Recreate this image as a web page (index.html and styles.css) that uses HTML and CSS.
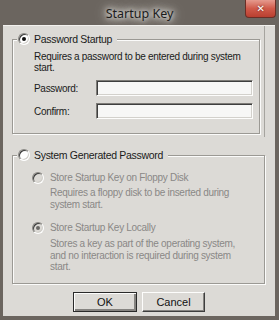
FILE: index.html
```html
<!DOCTYPE html>
<html lang="en">
<head>
  <meta charset="UTF-8">
  <meta name="viewport" content="width=device-width, initial-scale=1.0">
  <title>Startup Key</title>
  <link rel="stylesheet" href="styles.css">
</head>
<body>
  <div class="window">
    <div class="titlebar">
      <span class="title">Startup Key</span>
      <div class="close">&#x2715;</div>
    </div>

    <div class="client">
      <div class="top-panel">
        <div class="group group-password">
          <div class="caption">
            <span class="radio"><span class="dot"></span></span>
            <span>Password Startup</span>
          </div>
          <p class="desc">Requires a password to be entered during system<br>start.</p>
          <div class="field">
            <label>Password:</label>
            <input type="password" class="textbox">
          </div>
          <div class="field">
            <label>Confirm:</label>
            <input type="password" class="textbox">
          </div>
        </div>
      </div>

      <div class="group group-system">
        <div class="caption">
          <span class="radio"></span>
          <span>System Generated Password</span>
        </div>

        <div class="option disabled first">
          <span class="radio"></span>
          <span>Store Startup Key on Floppy Disk</span>
        </div>
        <p class="desc sub disabled">Requires a floppy disk to be inserted during<br>system start.</p>

        <div class="option disabled">
          <span class="radio"><span class="dot"></span></span>
          <span>Store Startup Key Locally</span>
        </div>
        <p class="desc sub disabled long">Stores a key as part of the operating system,<br>and no interaction is required during system<br>start.</p>
      </div>

      <div class="buttons">
        <button class="btn default">OK</button>
        <button class="btn">Cancel</button>
      </div>
    </div>
  </div>
</body>
</html>
```

FILE: styles.css
```css
* {
  margin: 0;
  padding: 0;
  box-sizing: border-box;
}

body {
  width: 279px;
  height: 320px;
  overflow: hidden;
  background: #6b655f;
  font-family: 'Liberation Sans', Arial, sans-serif;
  font-size: 10px;
  letter-spacing: -0.3px;
  white-space: nowrap;
  color: #1a1a1a;
}

.window {
  display: flex;
  flex-direction: column;
  width: 279px;
  height: 320px;
  background: #6b655f;
}

.titlebar {
  position: relative;
  height: 25px;
  flex-shrink: 0;
  display: flex;
  align-items: center;
  justify-content: center;
}

.title {
  font-family: 'Noto Sans', sans-serif;
  font-size: 12.5px;
  letter-spacing: 0;
  color: #1c1c1c;
  padding: 0 14px;
  margin-top: 1px;
  text-shadow: 0 0 5px #fff, 0 0 9px #f4f1ec, 0 0 14px #e8e4de;
}

.close {
  position: absolute;
  top: 0;
  right: 3px;
  width: 31px;
  height: 18px;
  display: flex;
  align-items: center;
  justify-content: center;
  background: linear-gradient(#e59a8e, #d05a4a 50%, #b93f30);
  border: 1px solid #6a2e26;
  border-top: none;
  border-radius: 0 0 4px 4px;
  color: #fff;
  font-family: 'DejaVu Sans', sans-serif;
  font-size: 10px;
  font-weight: bold;
  text-shadow: 0 0 2px #5a1a12;
}

.client {
  flex: 1;
  margin: 0 4px 4px 3px;
  background: #dcdad6;
  border-top: 1px solid #f2f1ee;
  display: flex;
  flex-direction: column;
}

.top-panel {
  width: 262px;
  padding: 13px 0 3px 9px;
  border-right: 1px solid #a6a49f;
}

.group {
  border: 1px solid #9b9994;
  box-shadow: inset 1px 1px 0 #fbfbfa, 1px 1px 0 #fbfbfa;
}

.group-password {
  width: 248px;
  padding: 0 0 14px 21px;
}

.group-system {
  width: 253px;
  margin: 18px 0 0 9px;
  padding: 0 0 10px 19px;
}

.caption {
  display: flex;
  align-items: center;
  gap: 4px;
  width: fit-content;
  height: 14px;
  margin: -8px 0 0 -17px;
  padding: 0 5px 0 1px;
  background: #dcdad6;
  font-size: 10.5px;
}

.group-system .caption {
  margin-left: -15px;
}

.radio {
  width: 12px;
  height: 12px;
  flex-shrink: 0;
  border-radius: 50%;
  display: flex;
  align-items: center;
  justify-content: center;
  background: #fff;
  border: 1px solid;
  border-color: #8a8884 #fff #fff #8a8884;
  box-shadow: inset 1px 1px 0 #3c3c3c, inset -1px -1px 0 #d0cec9;
}

.dot {
  width: 4px;
  height: 4px;
  border-radius: 50%;
  background: #111;
}

.desc {
  line-height: 11px;
  margin-top: 5px;
}

.field {
  display: flex;
  align-items: center;
  height: 16px;
  margin-top: 7px;
}

.field + .field {
  margin-top: 7px;
}

.field label {
  width: 62px;
}

.textbox {
  width: 157px;
  height: 16px;
  background: #f7f7f6;
  border: 1px solid;
  border-color: #7d7b77 #fdfdfc #fdfdfc #7d7b77;
  box-shadow: inset 1px 1px 0 #3e3e3e, inset -1px -1px 0 #d3d1cc;
  outline: none;
}

.option {
  display: flex;
  align-items: center;
  gap: 6px;
  height: 13px;
}

.option.first {
  margin-top: 9px;
}

.option + .desc + .option {
  margin-top: 10px;
}

.desc.sub {
  padding-left: 18px;
  margin-top: 3px;
  line-height: 12px;
}

.desc.long {
  margin-top: 4px;
  line-height: 11.5px;
}

.disabled {
  color: #8a8886;
}

.disabled .radio {
  background: #dcdad6;
}

.disabled .dot {
  background: #6a6866;
}

.buttons {
  display: flex;
  justify-content: center;
  gap: 5px;
  margin-top: 8px;
}

.btn {
  width: 63px;
  height: 20px;
  font-family: 'Liberation Sans', Arial, sans-serif;
  font-size: 11px;
  color: #111;
  background: #dcdad6;
  border: 1px solid;
  border-color: #fdfdfc #3e3e3e #3e3e3e #fdfdfc;
  box-shadow: inset -1px -1px 0 #858380;
}

.btn.default {
  width: 64px;
  border: 1px solid #2a2a2a;
  box-shadow: inset 1px 1px 0 #fdfdfc, inset -2px -2px 0 #858380;
}
```
